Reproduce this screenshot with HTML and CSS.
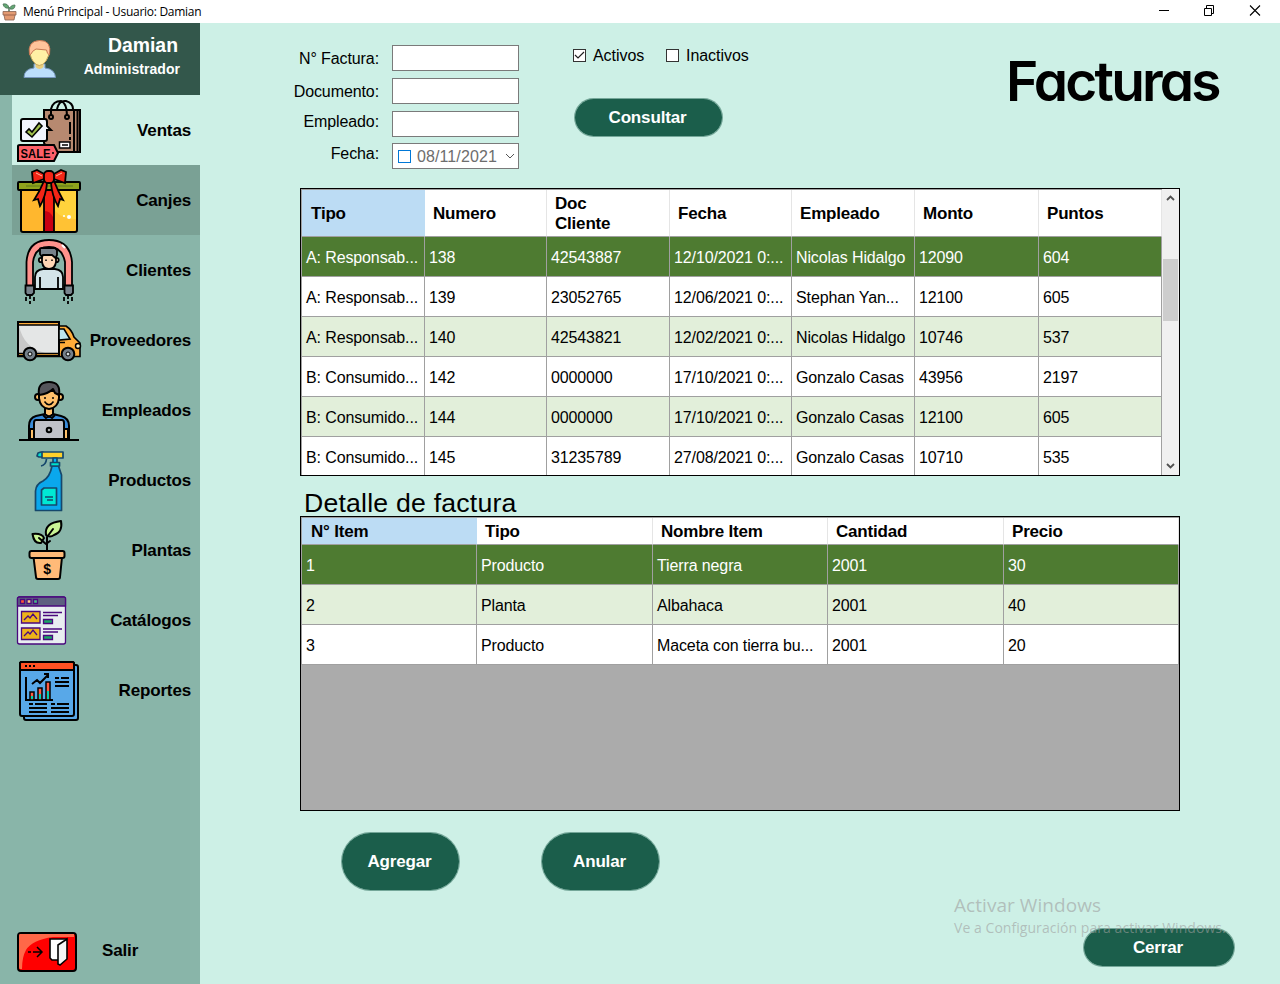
FILE: index.html
```html
<!DOCTYPE html>
<html lang="es">
<head>
<meta charset="utf-8">
<title>Menú Principal - Usuario: Damian</title>
<link rel="stylesheet" href="styles.css">
</head>
<body>
<header class="titlebar">
  <svg class="app-icon" width="16" height="18" viewBox="0 0 16 18"><path d="M7 10V4" stroke="#4c7358" stroke-width="1.5"/><path d="M7 5Q2 6 1 1Q6 0 7 5ZM8 6Q8 2 13 2Q13 7 8 6Z" fill="#63a874" stroke="#4c7358" stroke-width=".8"/><path d="M1 8.500H14V12H13L12 17H3L2 12H1Z" fill="#e39a72" stroke="#8a6350" stroke-width=".8"/><path d="M2 12H13" stroke="#9b6148"/></svg>
  <span class="window-title">Menú Principal - Usuario: Damian</span>
  <svg class="window-buttons" width="104" height="12" viewBox="0 0 104 12"><g fill="none" stroke="#000"><path d="M0 5.500H10M45.500 3.500H52.500V10.500H45.500ZM47.500 3V.5H54.500V8.500H53"/><path d="M91 .5L101 10.500M101 .5L91 10.500" stroke-width="1.100"/></g></svg>
</header>
<div class="workspace">
  <nav class="sidebar">
    <div class="profile">
      <svg width="34" height="40" viewBox="0 0 34 40"><path d="M11 25V29Q1 30 1 38.500H32.500Q32 30 22 29V25Z" fill="#bbdefb" stroke="#7796bd"/><path d="M12.500 22V28Q16.500 32 20.500 28V22Z" fill="#e9ce7b"/><path d="M8 9Q16 2 25 10Q27 17 23 22Q16 31 10 22Q6 17 8 9Z" fill="#fff0a5" stroke="#c7a65d"/><path d="M6.500 16Q4 2 16.500 1.500Q29 1 26.500 16Q24 15 23.500 11L13 10Q9 12 8 15Z" fill="#ffc49b" stroke="#c77853"/></svg>
      <div class="profile-text"><strong class="user">Damian</strong><span class="role">Administrador</span></div>
    </div>
    <div class="menu">
      <a class="item active"><svg class="icon" viewBox="0 0 70 70"><g fill="#b78970" stroke="#000" stroke-width="2"><path d="M32 15H68V57H38L32 48Z"/><path d="M62 15V57M65.500 15V57"/><path fill="none" d="M39 22V14Q41 6 49 6Q55 8 55 22M45 14Q47 5 54 6Q61 8 61 14"/><circle cx="39" cy="22" r="2"/><circle cx="55" cy="22" r="2"/><path d="M58 27V39M58 42V45"/><path fill="#fff" stroke-width="1.500" d="M47.500 47H58V53H47.500ZM50 50H56"/><path fill="#f2f4fd" d="M11 24H33Q35 24 35 27V31L39 35H35V44Q35 46 33 46H11Q9 46 9 44V26Q9 24 11 24Z"/><path fill="#9fbe4b" stroke-width="1.600" d="M14 37L17 34L20 37L27 28L30 31L20 42Z"/><path fill="#fc6068" d="M6 51Q6 50 8 50H42L46 58L42 66H6Z"/></g><text class="sale" x="8.500" y="62.800" textLength="30" lengthAdjust="spacingAndGlyphs">SALE</text><circle cx="41" cy="58" r="1"/></svg><span>Ventas</span></a>
      <a class="item hover"><svg class="icon" viewBox="0 0 70 70"><path d="M9 25H65V67H9Z" fill="#ffd33c"/><path d="M10 26H32V66H10Z" fill="#ffb72e"/><path d="M43 46Q52 55 65 54V66H43Z" fill="#ffc234"/><path d="M9 25H65V65Q65 67 63 67H11Q9 67 9 65Z" fill="none" stroke="#000" stroke-width="2"/><path d="M32 25H42V67H32Z" fill="#f62013" stroke="#000" stroke-width="1.800"/><path d="M33 46Q38 46 41 52V66H33Z" fill="#c80012"/><rect x="6" y="17" width="62" height="8" rx="1" fill="#8fa21c" stroke="#000" stroke-width="2"/><path d="M14 21H61" stroke="#5c771d"/><g fill="#f32617" stroke="#000" stroke-width="1.800"><path d="M32 14L21 18L20 7L25 5L34 10ZM42 14L53 18L54 7L49 5L40 10Z"/><path d="M32 16Q28 26 22 35L26 34L28 41Q34 31 35 18ZM42 16Q46 26 51 35L48 34L46 41Q40 31 39 18Z"/><rect x="32" y="6" width="10" height="12" rx="4"/></g><path d="M24 8L30 11M50 8L44 11" stroke="#ffb8a0"/><circle cx="57" cy="52" r="2" fill="#fff"/><circle cx="52" cy="51" r="1" fill="#fff"/></svg><span>Canjes</span></a>
      <a class="item"><svg class="icon" viewBox="0 0 70 70"><g stroke="#000" stroke-width="1.800"><path fill="#ff928c" d="M14.500 52V27Q16 5 37 5Q58 5 60 27V52H53V27Q50 12 37 12Q23 12 21 27V52Z"/><path fill="#d4e4e9" d="M23 54V42Q23 35 31 34H43Q51 35 51 42V54Z"/><path d="M28 42V54M46 42V54"/><circle cx="29" cy="25" r="2.200" fill="#ffd6b4"/><circle cx="44.500" cy="25" r="2.200" fill="#ffd6b4"/><path fill="#ffd6b4" d="M30 20H44V27Q43 34 37 34Q31 34 30 27Z"/><path fill="#77828b" d="M30 22L28 19V14Q28 13 30 13H43L45 15V20L43.500 23L40 20H31Z"/><path fill="#78848d" d="M13.500 50.500H22V58L20 60H15L13.500 58ZM52.500 50.500H61V58L59 60H54L52.500 58Z"/><path fill="none" stroke-dasharray="4 2" d="M14 62V67M18 60V69M22 62V67M52 62V67M56 60V69M60 62V67"/></g><path d="M34 24.500V26M40 24.500V26" stroke="#000" stroke-width="1.500"/><path d="M50 10L53 13" stroke="#fff" stroke-width="2"/></svg><span>Clientes</span></a>
      <a class="item"><svg class="icon" viewBox="0 0 70 70"><path fill="#e4e6e6" d="M6 17H47V51H6Z"/><path d="M7 21Q12 43 33 48H7Z" fill="#c8c8c8"/><g stroke="#000" stroke-width="1.600"><path fill="#ffac39" d="M6 17H47V20H6ZM6 48.500H47V51.500H6ZM47 21H54Q60 25 62 32L68 38V51.500H47Z"/><path fill="none" stroke-width="2" d="M6 17H47V51H6Z"/><path fill="#bce4ef" d="M47 24H52L58 34L47 35Z"/></g><path d="M48 37.500H53" stroke="#000" stroke-width="1.500"/><circle cx="66" cy="41" r="2.500" fill="#fff4c2" stroke="#000" stroke-width="1.500"/><g stroke="#000" stroke-width="2" fill="#75808a"><circle cx="18" cy="49" r="6.300"/><circle cx="56" cy="49" r="6.300"/></g><circle cx="18" cy="49" r="2" fill="#d5dde0" stroke="#000"/><circle cx="56" cy="49" r="2" fill="#d5dde0" stroke="#000"/></svg><span>Proveedores</span></a>
      <a class="item"><svg class="icon" viewBox="0 0 70 70"><g stroke="#000" stroke-width="2" stroke-linejoin="round"><path fill="#398bd9" d="M33 39L24 41Q17 43 17 51V64H57V51Q57 43 49 41L41 39L37 41Z"/><path fill="#ffc06b" d="M33 32H41V39L37 42L33 39Z"/><path d="M18 54H23V64H18ZM51 54H56V64H51Z" fill="#ffc06b"/><circle cx="26" cy="22" r="3" fill="#ffc06b"/><circle cx="48" cy="22" r="3" fill="#ffc06b"/><path fill="#ffc06b" d="M27 16V23Q28 33 37 34Q46 33 47 23V16Z"/><path fill="#55555b" d="M27 20Q25 7 37 7Q49 7 47 20L43 18L41 14Q36 19 27 20Z"/><path fill="#c0c1c8" d="M24 45H50Q52 45 52 48V64H22V48Q22 45 24 45Z"/><circle cx="37" cy="55" r="2.300" fill="#aaa"/><path d="M7 65H67M31 40L34 43L37 41L40 43L43 40" fill="none"/></g><path d="M32.500 26.500Q37 33 41.500 26.500" fill="none" stroke="#000" stroke-width="1.500"/><circle cx="33" cy="23" r="1"/><circle cx="41" cy="23" r="1"/></svg><span>Empleados</span></a>
      <a class="item"><svg class="icon" viewBox="0 0 70 70"><g stroke="#16486c" stroke-width="1.700" stroke-linejoin="round"><path fill="#02e0d0" d="M26 8L29 7H31V12H27L25 11Z"/><path fill="#ffd12b" d="M30 7H51V13H30Z"/><path fill="#00b7ff" d="M41 13H45V18H41Z"/><path fill="#0aa7ed" d="M40 21H46.500L49.500 30V65.500H23.500V46Q24 39 31 36Q38 32 40 21Z"/><path fill="#00e1cd" d="M38.500 17.500H47.500V21H38.500Z"/><path fill="#00e9d4" d="M32 43H44.500V60H29.500V45Z"/><path fill="none" d="M34.500 14Q34 20 29 21M33 52H41M35 55H41"/></g></svg><span>Productos</span></a>
      <a class="item"><svg class="icon" viewBox="0 0 70 70"><g stroke="#000" stroke-width="2" stroke-linejoin="round" stroke-linecap="round"><path fill="#c9f495" d="M34 20Q32 8 49 6Q51 17 42 20Q38 23 34 20Z"/><path fill="#c9f495" d="M32 23Q30 18 20.500 19Q22 29 29 28Z"/><path fill="none" d="M35 35V22L41 14M27 23L34 29L38 26"/><path fill="#ffba78" d="M21.500 42L24 62Q24 64 26 64H46Q48 64 48 62L50 42Z"/><rect x="17.500" y="36" width="35" height="7" rx="2" fill="#ffba78"/></g><text class="dollar" x="35" y="58.500">$</text></svg><span>Plantas</span></a>
      <a class="item"><svg class="icon" viewBox="0 0 70 70"><g stroke="#4a087e" stroke-width="1.300"><rect x="5.500" y="12" width="48" height="47" rx="2" fill="#e9eef1"/><path fill="#5d6080" d="M5.500 21V13L7 12H52L53.500 13V21Z"/><path fill="#eeb319" d="M9.500 26.500H28V38H9.500ZM9.500 43H28V54.500H9.500Z"/><path fill="none" d="M12 35L16 31L18 33L21 29L25 34M12 51L16 47L18 49L21 45L25 50M31 27.500H50M31 30.500H46M31 44H50M31 47H46"/><path fill="#19a764" d="M31.500 34.500H40.500V38.500H31.500ZM31.500 50.500H40.500V54.500H31.500Z"/><path fill="#f53" d="M8.500 14.500H12.500V18.500H8.500Z"/><path fill="#fc8" d="M15 14.500H19V18.500H15Z"/><path fill="#4b8" d="M21.500 14.500H25.500V18.500H21.500Z"/></g></svg><span>Catálogos</span></a>
      <a class="item"><svg class="icon" viewBox="0 0 70 70"><g stroke="#000" stroke-width="2"><rect x="12" y="10" width="54" height="55" rx="2" fill="#58a8e8"/><rect x="8" y="7" width="54" height="54" rx="2" fill="#58a8e8"/><path fill="#ff5223" d="M8 15V8L9 7H61L62 8V15Z"/><path fill="none" d="M14 22V45H41M20 29L25 25L28 28L36 20M32 19H36V23M43 23H47M49 23H57M43 27H57M43 31H57M17 49H21M23 49H35M17 53H35M17 57H35M39 49H43M45 49H57M39 53H57M39 57H57"/><path fill="#ff5b43" stroke-width="1.500" d="M18 37H22V45H18ZM26 33H30V45H26ZM34 27H38V45H34Z"/></g><path d="M19 41H21V44H19ZM27 39H29V44H27ZM35 36H37V44H35Z" fill="#00d2ac"/><path d="M13 11H15M17 11H19M21 11H23" stroke="#000" stroke-width="2"/></svg><span>Reportes</span></a>
    </div>
    <a class="item exit"><svg class="icon" viewBox="0 0 70 70"><rect x="6" y="18" width="58" height="38" rx="3" fill="#f00" stroke="#000" stroke-width="2"/><path d="M8 19H62V22H41Q20 25 14 35Q10 42 10 54H8Q7 54 7 52V21Q7 19 8 19Z" fill="#ff6848"/><path d="M16 37H19M21 37H29M25 32L30 37L25 42" fill="none" stroke="#000" stroke-width="1.500"/><path d="M46 45H40L38 43V24H55" fill="#fff" stroke="#000" stroke-width="1.600"/><path d="M46 30L55 24V44L48 50L46 49Z" fill="#f4f4f4" stroke="#000" stroke-width="1.600"/></svg><span>Salir</span></a>
  </nav>
  <main class="content">
    <section class="filters">
      <div class="labels"><label>N° Factura:</label><label>Documento:</label><label>Empleado:</label><label>Fecha:</label></div>
      <div class="fields"><div class="field"></div><div class="field"></div><div class="field"></div>
        <div class="field date"><i class="box blue"></i><span>08/11/2021</span><svg width="10" height="6" viewBox="0 0 10 6"><path d="M1 1L5 5L9 1" fill="none" stroke="#555"/></svg></div></div>
      <div class="search">
        <div class="checks"><i class="box"><svg width="11" height="11" viewBox="0 0 11 11"><path d="M1 5L4 8L10 2" fill="none" stroke="#222" stroke-width="1.200"/></svg></i><span class="first">Activos</span><i class="box"></i><span>Inactivos</span></div>
        <button class="btn consult">Consultar</button>
      </div>
      <h1 class="page-title">Facturas</h1>
    </section>
    <section class="grid-box invoices">
      <div class="rows">
        <div class="row head"><b class="sorted">Tipo</b><b>Numero</b><b>Doc<br>Cliente</b><b>Fecha</b><b>Empleado</b><b>Monto</b><b>Puntos</b></div>
        <div class="row selected"><span>A: Responsab...</span><span>138</span><span>42543887</span><span>12/10/2021 0:...</span><span>Nicolas Hidalgo</span><span>12090</span><span>604</span></div>
        <div class="row"><span>A: Responsab...</span><span>139</span><span>23052765</span><span>12/06/2021 0:...</span><span>Stephan Yan...</span><span>12100</span><span>605</span></div>
        <div class="row alt"><span>A: Responsab...</span><span>140</span><span>42543821</span><span>12/02/2021 0:...</span><span>Nicolas Hidalgo</span><span>10746</span><span>537</span></div>
        <div class="row"><span>B: Consumido...</span><span>142</span><span>0000000</span><span>17/10/2021 0:...</span><span>Gonzalo Casas</span><span>43956</span><span>2197</span></div>
        <div class="row alt"><span>B: Consumido...</span><span>144</span><span>0000000</span><span>17/10/2021 0:...</span><span>Gonzalo Casas</span><span>12100</span><span>605</span></div>
        <div class="row"><span>B: Consumido...</span><span>145</span><span>31235789</span><span>27/08/2021 0:...</span><span>Gonzalo Casas</span><span>10710</span><span>535</span></div>
      </div>
      <div class="scrollbar">
        <svg width="9" height="6" viewBox="0 0 9 6"><path d="M1 5L4.500 1.500L8 5" fill="none" stroke="#505050" stroke-width="1.800"/></svg>
        <div class="thumb"></div>
        <svg class="down" width="9" height="6" viewBox="0 0 9 6"><path d="M1 1L4.500 4.500L8 1" fill="none" stroke="#505050" stroke-width="1.800"/></svg>
      </div>
    </section>
    <h2 class="detail-title">Detalle de factura</h2>
    <section class="grid-box details">
      <div class="rows">
        <div class="row head"><b class="sorted">N° Item</b><b>Tipo</b><b>Nombre Item</b><b>Cantidad</b><b>Precio</b></div>
        <div class="row selected"><span>1</span><span>Producto</span><span>Tierra negra</span><span>2001</span><span>30</span></div>
        <div class="row alt"><span>2</span><span>Planta</span><span>Albahaca</span><span>2001</span><span>40</span></div>
        <div class="row"><span>3</span><span>Producto</span><span>Maceta con tierra bu...</span><span>2001</span><span>20</span></div>
      </div>
    </section>
    <div class="actions"><button class="btn big">Agregar</button><button class="btn big">Anular</button></div>
    <div class="footer"><button class="btn close">Cerrar</button></div>
    <div class="watermark"><div class="wm-title">Activar Windows</div><div class="wm-text">Ve a Configuración para activar Windows.</div></div>
  </main>
</div>
</body>
</html>
```
FILE: styles.css
```css
* { box-sizing: border-box; }
body { margin: 0; width: 1280px; height: 984px; overflow: hidden; display: flex; flex-direction: column; font: 16px/20px "Liberation Sans", Arial, sans-serif; color: #000; }
svg { flex: none; display: block; }
.titlebar { height: 23px; display: flex; align-items: center; padding: 0 17px 0 2px; background: #fff; }
.window-title { margin-left: 5px; font: 12px/20px "Open Sans", "Noto Sans", sans-serif; letter-spacing: -.28px; }
.window-buttons { margin-left: auto; margin-top: -1px; }
.workspace { flex: 1; display: flex; min-height: 0; }
.sidebar { width: 200px; background: #89b5a9; display: flex; flex-direction: column; }
.profile { height: 72px; background: #33574b; color: #fff; display: flex; padding: 16px 20px 0 23px; justify-content: space-between; }
.profile-text { display: flex; flex-direction: column; align-items: flex-end; margin-top: -6px; }
.user { font-size: 19.4px; line-height: 24px; margin-right: 2px; }
.role { font-weight: bold; font-size: 14px; line-height: 24px; letter-spacing: .05px; }
.menu { padding-left: 12px; }
.item { height: 70px; display: flex; align-items: center; justify-content: space-between; padding-right: 9px; font-weight: bold; font-size: 17px; letter-spacing: -.15px; }
.item span { padding-top: 1px; }
.active { background: #cdf0e6; }
.hover { background: #7aa195; }
.icon { width: 70px; height: 70px; margin-right: -10px; }
.sale { font: bold 13px "Liberation Sans", sans-serif; letter-spacing: 0; }
.dollar { font: bold 14px "Liberation Sans", sans-serif; text-anchor: middle; }
.exit { margin-top: auto; margin-left: 12px; margin-bottom: -1px; justify-content: flex-start; gap: 30px; }
.content { flex: 1; background: #cdf0e6; display: flex; flex-direction: column; position: relative; }
.filters { height: 165px; display: flex; align-items: flex-start; padding: 22px 62px 0 80px; }
.labels { width: 99px; display: grid; grid-template-rows: 33px 30px 32px 20px; text-align: right; padding-top: 4px; letter-spacing: -.1px; }
.fields { width: 127px; margin-left: 13px; display: grid; grid-template-rows: repeat(3, 26px) 26px; row-gap: 7px; }
.field { border: 1px solid #7a7a7a; background: #fff; }
.date { margin-top: -1px; height: 26px; display: flex; align-items: center; padding: 0 3px 0 5px; color: #6d6d6d; }
.date span { margin: 2px auto 0 6px; letter-spacing: .1px; }
.box { width: 13px; height: 13px; border: 1px solid #333; background: #fff; display: block; flex: none; }
.blue { border-color: #0078d7; }
.search { margin-left: 54px; display: flex; flex-direction: column; align-items: flex-start; }
.checks { display: flex; align-items: center; height: 21px; letter-spacing: -.05px; }
.checks span { margin-left: 7px; }
.checks .first { width: 73px; }
.btn { border: 1px solid #6fa391; border-radius: 30px; background: #1b5e4b; background-clip: padding-box; color: #fff; font: bold 17px/20px "Liberation Sans", Arial, sans-serif; letter-spacing: -.15px; padding: 0 2px 0 0; border-color: rgba(27, 94, 75, .5); }
.consult { width: 149px; height: 39px; margin: 32px 0 0 1px; }
.page-title { font: 600 55px/60px Inter, Lato, sans-serif; font-feature-settings: "cv11"; margin: 6px 0 0 auto; width: 212px; letter-spacing: -2.800px; white-space: nowrap; }
.grid-box { width: 880px; margin-left: 100px; border: 1px solid #000; display: flex; overflow: hidden; }
.invoices { height: 288px; background: #fff; }
.invoices .rows { width: 861px; }
.details { height: 295px; background: #ababab; }
.rows { border-left: 1px solid #a0a0a0; border-top: 1px solid #a0a0a0; flex: none; align-self: flex-start; }
.row { display: grid; grid-template-columns: 123px 122px 123px 122px 123px 124px 123px; height: 40px; background: #fff; }
.details .row { grid-template-columns: 175px 176px 175px 176px 175px; }
.row > * { border-right: 1px solid #a0a0a0; border-bottom: 1px solid #a0a0a0; display: flex; align-items: center; padding: 2px 0 0 4px; white-space: nowrap; overflow: hidden; }
.row > span { letter-spacing: -.12px; }
.row.head { height: 47px; }
.details .row.head { height: 27px; }
.row.head > b { padding: 2px 0 0 8px; border-right-color: #e5e5e5; font-size: 17px; letter-spacing: -.2px; }
.row.head > .sorted { padding-left: 9px; background: #bcdcf4; border-right-color: #bcdcf4; }
.row.alt { background: #e2efda; }
.row.selected { background: #4e7b31; color: #fff; }
.scrollbar { width: 17px; background: #f0f0f0; display: flex; flex-direction: column; align-items: center; padding: 6px 0; }
.thumb { width: 15px; height: 62px; margin-top: 58px; background: #cdcdcd; }
.down { margin-top: auto; }
.detail-title { margin: 0 0 0 104px; height: 40px; font-size: 26.67px; line-height: 54px; font-weight: normal; letter-spacing: .2px; }
.actions { display: flex; gap: 81px; margin: 21px 0 0 141px; }
.big { width: 119px; height: 59px; }
.footer { display: flex; justify-content: flex-end; margin: 37px 45px 0 0; }
.close { width: 152px; height: 39px; }
.watermark { position: absolute; left: 754px; top: 870px; color: rgba(158, 158, 158, .6); font-family: "Open Sans", "Noto Sans", sans-serif; white-space: nowrap; }
.wm-title { font-size: 19px; line-height: 25px; letter-spacing: .05px; }
.wm-text { font-size: 14px; line-height: 20px; letter-spacing: .05px; }
```
